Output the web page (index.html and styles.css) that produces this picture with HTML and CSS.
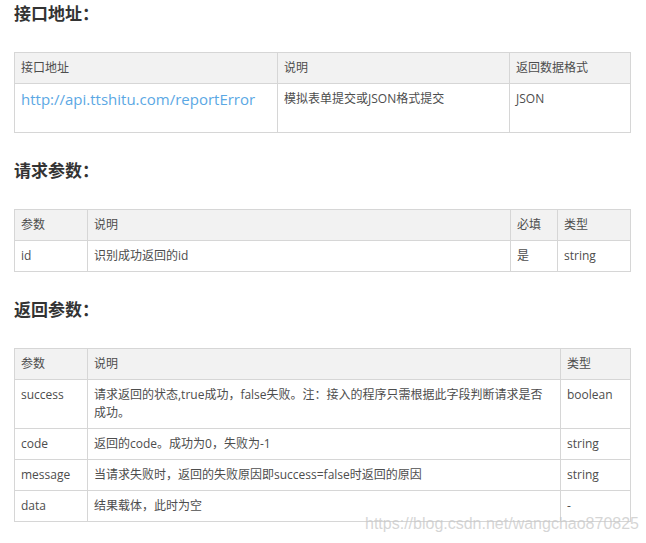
FILE: index.html
```html
<!DOCTYPE html>
<html lang="zh">
<head>
<meta charset="utf-8">
<title>接口文档</title>
<link rel="stylesheet" href="styles.css">
</head>
<body>
<div class="doc">
  <h3 class="title first">接口地址：</h3>
  <table class="grid">
    <colgroup><col class="c263"><col class="c232"><col class="c121"></colgroup>
    <thead><tr><th>接口地址</th><th>说明</th><th>返回数据格式</th></tr></thead>
    <tbody>
      <tr class="tall"><td><a class="link" href="#">http://api.ttshitu.com/reportError</a></td><td>模拟表单提交或JSON格式提交</td><td>JSON</td></tr>
    </tbody>
  </table>

  <h3 class="title">请求参数：</h3>
  <table class="grid">
    <colgroup><col class="c73"><col class="c423"><col class="c47"><col class="c73b"></colgroup>
    <thead><tr><th>参数</th><th>说明</th><th>必填</th><th>类型</th></tr></thead>
    <tbody>
      <tr><td>id</td><td>识别成功返回的id</td><td>是</td><td>string</td></tr>
    </tbody>
  </table>

  <h3 class="title">返回参数：</h3>
  <table class="grid">
    <colgroup><col class="c73"><col class="c473"><col class="c70"></colgroup>
    <thead><tr><th>参数</th><th>说明</th><th>类型</th></tr></thead>
    <tbody>
      <tr><td>success</td><td>请求返回的状态,true成功，false失败。注：接入的程序只需根据此字段判断请求是否成功。</td><td>boolean</td></tr>
      <tr><td>code</td><td>返回的code。成功为0，失败为-1</td><td>string</td></tr>
      <tr><td>message</td><td>当请求失败时，返回的失败原因即success=false时返回的原因</td><td>string</td></tr>
      <tr><td>data</td><td>结果载体，此时为空</td><td>-</td></tr>
    </tbody>
  </table>
</div>
<div class="watermark">https://blog.csdn.net/wangchao870825</div>
</body>
</html>
```
FILE: styles.css
```css
html, body {
  margin: 0;
  padding: 0;
  background: #ffffff;
}
body {
  font-family: "Open Sans", "Noto Sans CJK SC", sans-serif;
  color: #4d4d4d;
  position: relative;
  height: 543px;
  overflow: hidden;
}
.doc {
  padding: 0 16px 0 14px;
}
.title {
  margin: 26px 0 26px 0;
  font-size: 17px;
  line-height: 24px;
  font-weight: bold;
  color: #333333;
}
.title.first {
  margin-top: 2px;
}
.grid {
  border-collapse: collapse;
  table-layout: fixed;
  width: 616px;
  font-size: 12px;
}
.grid th, .grid td {
  border: 1px solid #d6d6d6;
  padding: 6px 6px 6px 6px;
  line-height: 18px;
  text-align: left;
  vertical-align: top;
  font-weight: normal;
  color: #4d4d4d;
}
.grid th {
  background: #f2f2f2;
}
.grid tr.tall td {
  height: 36px;
}
.link {
  color: #5ba8e4;
  font-size: 15px;
  text-decoration: none;
  line-height: 18px;
}
.c263 { width: 263px; }
.c232 { width: 232px; }
.c121 { width: 121px; }
.c73 { width: 73px; }
.c423 { width: 423px; }
.c47 { width: 47px; }
.c73b { width: 73px; }
.c473 { width: 473px; }
.c70 { width: 70px; }
.watermark {
  position: absolute;
  left: 365px;
  top: 516px;
  font-family: "Liberation Sans", Arial, sans-serif;
  font-size: 16px;
  line-height: 16px;
  color: rgba(200, 200, 200, 0.75);
  white-space: nowrap;
}
```
